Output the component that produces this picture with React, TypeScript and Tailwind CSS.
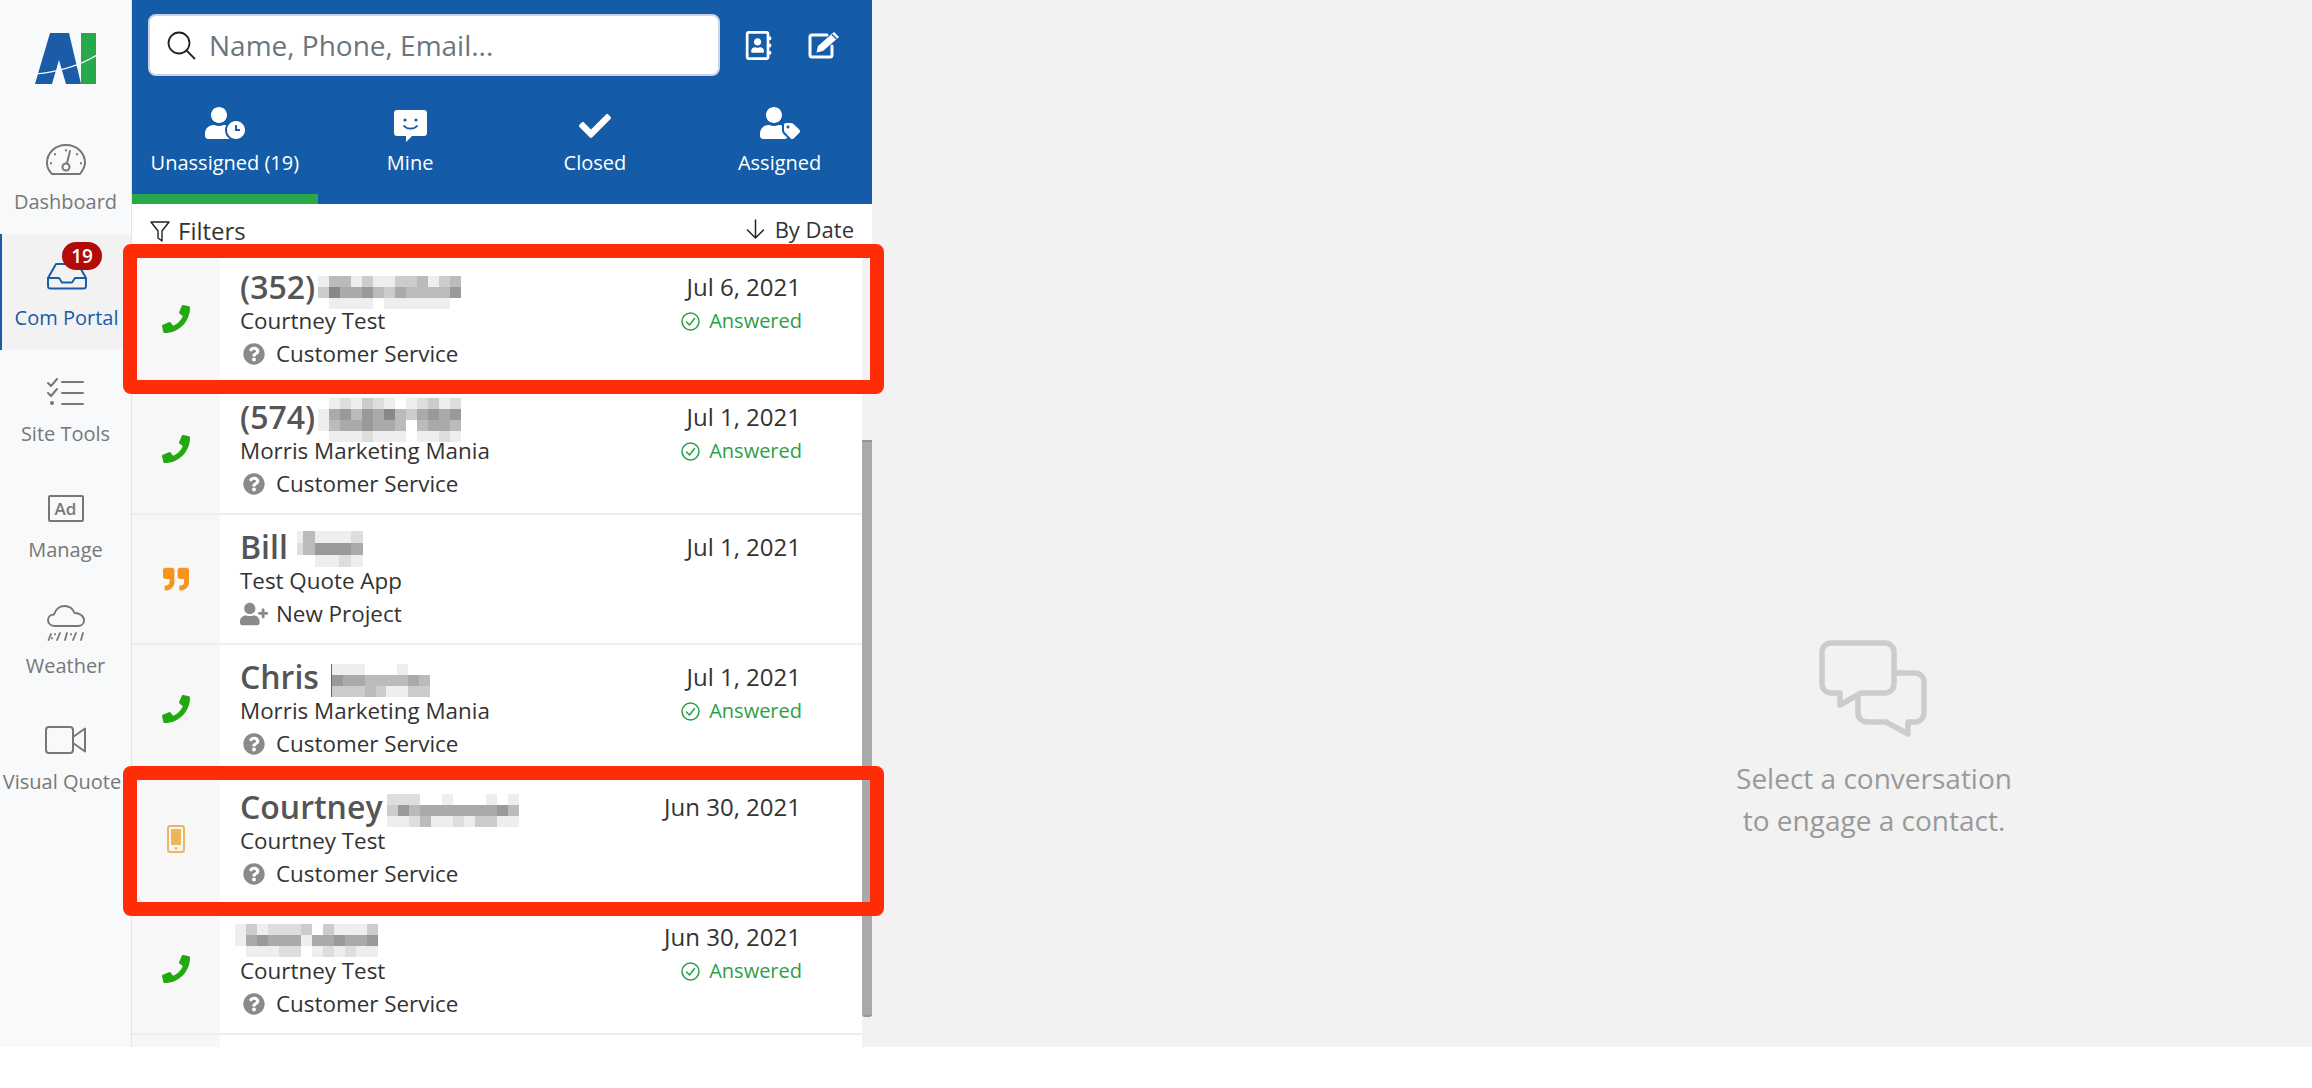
import type { ReactNode } from "react";
import {
  FaCheck,
  FaPhone,
  FaQuestionCircle,
  FaQuoteRight,
  FaRegAddressBook,
  FaUserClock,
  FaUserPlus,
  FaUserTag,
} from "react-icons/fa";

// rows of grey levels, one hex digit a cell
function Mosaic({ rows, cell = 11, inset = 0, className = "" }: { rows: string[]; cell?: number; inset?: number; className?: string }) {
  const w = Math.max(...rows.map((r) => r.length)) * cell;
  const h = rows.length * cell;
  return (
    <svg width={w - inset} height={h} viewBox={`${inset} 0 ${w - inset} ${h}`} shapeRendering="crispEdges" className={`blur-[0.6px] ${className}`}>
      {rows.map((row, y) =>
        row.split("").map((c, x) => {
          const v = parseInt(c, 16) * 17;
          return <rect key={`${x}-${y}`} x={x * cell} y={y * cell} width={cell} height={cell} fill={`rgb(${v},${v},${v})`} />;
        })
      )}
    </svg>
  );
}

function Logo() {
  return (
    <svg width="62" height="52" viewBox="0 0 62 52">
      <path d="M15 0H34L46 51H31L24 27L17 51H0Z" fill="#1a5ca8" />
      <rect x="46" y="0" width="15" height="51" fill="#27a84a" />
      <path d="M0 41C22 39 44 33 62 22" fill="none" stroke="#f8f9fb" strokeWidth="1.2" />
    </svg>
  );
}

const stroke = { fill: "none", stroke: "#777", strokeWidth: 2, strokeLinecap: "round", strokeLinejoin: "round" } as const;

function GaugeIcon() {
  return (
    <svg width="42" height="33" viewBox="0 0 42 33" className="-mb-[2px]" {...stroke}>
      <path d="M7 31H35C38 27 40 24 40 20C40 10 32 2 21 2C10 2 2 10 2 20C2 24 4 28 7 31Z" />
      <circle cx="21" cy="24" r="3.5" />
      <path d="M22 20L25 8M21 7V7.5M10 11V11.5M32 11V11.5M6 20V20.5M36 20V20.5" />
    </svg>
  );
}

function InboxIcon() {
  return (
    <svg width="42" height="28" viewBox="0 0 42 28" fill="none" stroke="#1a5ca8" strokeWidth="2" strokeLinejoin="round">
      <path d="M2 16L10 2H32L40 16V24C40 25.5 39 26.5 37.5 26.5H4.5C3 26.5 2 25.5 2 24Z" />
      <path d="M2 16H13L16 20.5H26L29 16H40" />
    </svg>
  );
}

function ChecklistIcon() {
  return (
    <svg width="38" height="28" viewBox="0 0 38 28" {...stroke}>
      <path d="M1 5L4 8L10 1M1 15L4 18L10 11M15 4H36M15 15H36M15 26H36" />
      <circle cx="5" cy="25" r="1" />
    </svg>
  );
}

function CloudRainIcon() {
  return (
    <svg width="38" height="37" viewBox="0 0 38 37" className="-mb-[4px]" {...stroke}>
      <path d="M8 21C4 21 1 18.5 1 15C1 11.5 4 9.5 7 9.5C8.5 4 13 1 17.5 1C22.5 1 26 4 27.5 8C32.5 8 37 11 37 15.5C37 19 34 21 31 21Z" />
      <path d="M4 29L1.5 35M13 28L10 35M20 28L18 35M29 28L26 35M36 28L34 35M8 29V29.5M24 29V29.5M5 33V33.5" strokeWidth="1.8" />
    </svg>
  );
}

function VideoIcon() {
  return (
    <svg width="42" height="28" viewBox="0 0 42 28" {...stroke}>
      <rect x="1" y="1" width="27" height="26" rx="3" />
      <path d="M28 11L40 2.5V25.5L28 17" />
    </svg>
  );
}

function AdIcon() {
  return (
    <div className="flex h-[27px] w-[36px] items-center justify-center rounded-[2px] border-2 border-[#777] text-[17px] leading-none font-semibold text-[#777]">
      Ad
    </div>
  );
}

function SearchIcon() {
  return (
    <svg width="29" height="29" viewBox="0 0 29 29" fill="none" stroke="#222" strokeWidth="1.8" strokeLinecap="round">
      <circle cx="12" cy="12" r="10.5" />
      <path d="M19.5 19.5L27.5 27.5" />
    </svg>
  );
}

function EditIcon() {
  return (
    <svg width="33" height="29" viewBox="0 0 33 29" className="mt-[16px] ml-[35px]">
      <path d="M19 5H4C2.8 5 2 5.8 2 7V25C2 26.2 2.8 27 4 27H22C23.2 27 24 26.2 24 25V16" fill="none" stroke="#fff" strokeWidth="3" strokeLinecap="round" />
      <path d="M26 2L31 7L15 21L8.5 22.5L10 16Z" fill="#fff" />
      <path d="M24 4.5L28.5 9" stroke="#145ca8" strokeWidth="1.4" />
    </svg>
  );
}

function MineIcon() {
  return (
    <svg width="33" height="32" viewBox="0 0 33 32">
      <path d="M3 0H30C31.7 0 33 1.3 33 3V23C33 24.7 31.7 26 30 26H18L12 32V26H3C1.3 26 0 24.7 0 23V3C0 1.3 1.3 0 3 0Z" fill="#fff" />
      <circle cx="11" cy="10" r="1.6" fill="#145ca8" />
      <circle cx="22" cy="10" r="1.6" fill="#145ca8" />
      <path d="M10 16C13 19.5 20 19.5 23 16" fill="none" stroke="#145ca8" strokeWidth="1.8" strokeLinecap="round" />
    </svg>
  );
}

function FilterIcon() {
  return (
    <svg width="20" height="21" viewBox="0 0 20 21" fill="none" stroke="#222" strokeWidth="1.4" strokeLinejoin="round">
      <path d="M1 1H19L12 10V20L8 17V10Z" />
    </svg>
  );
}

function ArrowIcon() {
  return (
    <svg width="19" height="20" viewBox="0 0 19 20" fill="none" stroke="#222" strokeWidth="1.5" strokeLinecap="round" strokeLinejoin="round">
      <path d="M9.5 1V19M1.5 11L9.5 19L17.5 11" />
    </svg>
  );
}

function DeviceIcon() {
  return (
    <svg width="18" height="28" viewBox="0 0 18 28">
      <rect x="1" y="1" width="16" height="26" rx="2.5" fill="none" stroke="#edb55c" strokeWidth="2" />
      <rect x="4" y="4" width="10" height="16" fill="#edb55c" />
      <circle cx="9" cy="23.5" r="1.4" fill="#edb55c" />
    </svg>
  );
}

function AnsweredIcon() {
  return (
    <svg width="19" height="19" viewBox="0 0 19 19" fill="none" stroke="#2a9f49" strokeWidth="1.5" strokeLinecap="round" strokeLinejoin="round">
      <circle cx="9.5" cy="9.5" r="8.5" />
      <path d="M5.5 10L8.5 13L13.5 6.5" />
    </svg>
  );
}

function ChatsIcon() {
  return (
    <svg width="110" height="97" viewBox="0 0 110 97" fill="none" stroke="#ccc" strokeWidth="5.5" strokeLinejoin="round">
      <path d="M12 3H66C71 3 75 7 75 12V44C75 49 71 53 66 53H42L21 65V53H12C7 53 3 49 3 44V12C3 7 7 3 12 3Z" />
      <path d="M75 33H96C101 33 105 37 105 42V73C105 78 101 82 96 82H89V94L67 82H48C43 82 39 78 39 73V53" />
    </svg>
  );
}

const phone = <FaPhone className="text-[28px] text-[#22a90f]" />;

const rows = [
  {
    name: "(352)",
    blur: <Mosaic rows={["ebbeceeccbecb", "c8aa9bcabbbb9", "feeeefeeeeeef"]} className="mt-[10px] ml-[3px]" />,
    sub: "Courtney Test",
    date: "Jul 6, 2021",
    answered: true,
    icon: phone,
  },
  {
    name: "(574)",
    blur: <Mosaic rows={["fedecdefedced", "ea9b9a8bca9a9", "ebaa9aabfbaab", "feeedeeefeede"]} className="mt-[6px] ml-[3px]" />,
    sub: "Morris Marketing Mania",
    date: "Jul 1, 2021",
    answered: true,
    icon: phone,
  },
  {
    name: "Bill",
    blur: (
      <div className="mt-[-1px] ml-[9px] h-[41px] self-start overflow-hidden pt-[5px]">
        <Mosaic rows={["ebeeedf", "db999af", "ffeedef", "efdefcee"]} cell={12} inset={6} />
      </div>
    ),
    sub: "Test Quote App",
    date: "Jul 1, 2021",
    answered: false,
    icon: <FaQuoteRight className="text-[26px] text-[#f7941d]" />,
    tag: "New Project",
  },
  {
    name: "Chris",
    blur: <Mosaic rows={["eeefffeff", "9aabbbbab", "cccbceecc"]} className="mt-[6px] ml-[12px] border-l border-[#666]" />,
    sub: "Morris Marketing Mania",
    date: "Jul 1, 2021",
    answered: true,
    icon: phone,
  },
  {
    name: "Courtney",
    blur: <Mosaic rows={["dddffefffefe", "c9baaaaaaa9b", "eedbeedeccee"]} className="mt-[6px] ml-[4px]" />,
    sub: "Courtney Test",
    date: "Jun 30, 2021",
    answered: false,
    icon: <DeviceIcon />,
  },
  {
    name: "",
    blur: <Mosaic rows={["ecedddcfceeec", "ea9aaaeaa9aa9", "feeeddfededee"]} className="mt-[6px] -ml-[5px]" />,
    sub: "Courtney Test",
    date: "Jun 30, 2021",
    answered: true,
    icon: phone,
  },
];

function Row({ row }: { row: (typeof rows)[number] }) {
  return (
    <div className="flex h-[130px] shrink-0 border-b-2 border-[#eeeeee] bg-white">
      <div className="flex w-[88px] shrink-0 items-center justify-center bg-[#f7f7f7]">{row.icon}</div>
      <div className="flex min-w-0 flex-1 flex-col pl-[20px] pt-[12px]">
        <div className="flex h-[40px] items-center text-[32px] leading-none font-semibold text-[#555]">
          {row.name}
          {row.blur}
        </div>
        <div className="mt-[-1px] text-[22.4px] leading-[30px] text-[#333]">{row.sub}</div>
        <div className="mt-[2px] flex items-center text-[22.4px] leading-[32px] text-[#333]">
          {row.tag ? (
            <FaUserPlus className="mr-[8px] text-[28px] text-[#8a8a8a]" />
          ) : (
            <FaQuestionCircle className="mr-[11px] ml-[3px] text-[22px] text-[#8a8a8a]" />
          )}
          {row.tag ?? "Customer Service"}
        </div>
      </div>
      <div className="flex flex-col items-end pt-[15px] pr-[60px]">
        <div className="pr-[1px] text-[24px] leading-[34px] text-[#333]">{row.date}</div>
        {row.answered ? (
          <div className="mt-[1px] flex items-center gap-[9px] text-[20px] leading-[32px] text-[#2a9f49]">
            <AnsweredIcon />
            Answered
          </div>
        ) : null}
      </div>
    </div>
  );
}

function NavItem({ icon, label, active, labelClass = "" }: { icon: ReactNode; label: string; active?: boolean; labelClass?: string }) {
  return (
    <div
      className={
        active
          ? "relative flex h-[116px] flex-col items-center border-l-2 border-[#145ca8] bg-[#f2f2f2] text-[#145ca8]"
          : "flex h-[116px] flex-col items-center text-[#777]"
      }
    >
      <div className="flex h-[62px] items-end pb-[6px]">{icon}</div>
      <div className={`mt-[8px] text-[20px] leading-[28px] whitespace-nowrap ${labelClass}`}>{label}</div>
      {active ? (
        <span className="absolute top-[8px] left-[60px] flex h-[28px] w-[40px] items-center justify-center rounded-full bg-[#b30a0a] text-[19px] leading-none font-semibold text-white">
          19
        </span>
      ) : null}
    </div>
  );
}

function Sidebar() {
  return (
    <aside className="flex w-[132px] shrink-0 flex-col border-r border-[#e4e5e7] bg-[#f8f9fb]">
      <div className="flex h-[118px] items-start justify-center pt-[33px]">
        <Logo />
      </div>
      <NavItem icon={<GaugeIcon />} label="Dashboard" />
      <NavItem active icon={<InboxIcon />} label="Com Portal" />
      <NavItem icon={<ChecklistIcon />} label="Site Tools" />
      <NavItem icon={<AdIcon />} label="Manage" />
      <NavItem icon={<CloudRainIcon />} label="Weather" />
      <NavItem icon={<VideoIcon />} label="Visual Quote" labelClass="pr-[7px]" />
    </aside>
  );
}

function Tab({ icon, label, active }: { icon: ReactNode; label: string; active?: boolean }) {
  return (
    <div className={active ? "flex w-[186px] flex-col items-center border-b-[10px] border-[#28a84a]" : "flex w-[185px] flex-col items-center border-b-[10px] border-transparent"}>
      <div className="flex h-[40px] items-end">{icon}</div>
      <div className="mt-[6px] text-[20px] leading-[30px] text-white">{label}</div>
    </div>
  );
}

function ListPanel() {
  return (
    <section className="flex w-[740px] shrink-0 flex-col">
      <div className="flex h-[204px] flex-col bg-[#145ca8]">
        <div className="flex h-[102px] items-start pt-[14px] pl-[16px]">
          <div className="flex h-[62px] w-[572px] items-center rounded-[8px] border-2 border-[#c9d5e6] bg-white pl-[17px]">
            <SearchIcon />
            <span className="ml-[13px] text-[28px] text-[#6c757d]">Name, Phone, Email...</span>
          </div>
          <FaRegAddressBook className="mt-[17px] ml-[24px] text-[29px] text-white" />
          <EditIcon />
        </div>
        <div className="flex flex-1">
          <Tab active icon={<FaUserClock className="-mb-[1px] text-[40px] text-white" />} label="Unassigned (19)" />
          <Tab icon={<MineIcon />} label="Mine" />
          <Tab icon={<FaCheck className="text-[32px] text-white" />} label="Closed" />
          <Tab icon={<FaUserTag className="-mb-[1px] text-[40px] text-white" />} label="Assigned" />
        </div>
      </div>
      <div className="flex h-[51px] shrink-0 items-start justify-between bg-white pt-[12px] pr-[18px] pl-[18px] text-[24px] leading-[30px] text-[#333]">
        <div className="flex items-center gap-[8px]">
          <FilterIcon />
          Filters
        </div>
        <div className="-mt-[2px] flex items-center gap-[10px] text-[22px]">
          <ArrowIcon />
          By Date
        </div>
      </div>
      <div className="flex min-h-0 flex-1">
        <div className="flex w-[730px] flex-col overflow-hidden">
          {rows.map((r, i) => (
            <Row key={i} row={r} />
          ))}
          <div className="flex h-[130px] shrink-0 bg-white">
            <div className="w-[88px] bg-[#f7f7f7]" />
          </div>
        </div>
        <div className="w-[10px] bg-[#f2f2f2]">
          <div className="mt-[185px] h-[577px] rounded-b-[3px] border-y-2 border-[#8b97a8] bg-[#a9a9a9]" />
        </div>
      </div>
    </section>
  );
}

function EmptyPane() {
  return (
    <section className="flex flex-1 flex-col items-center bg-[#f2f2f2] pt-[640px] pl-[564px]">
      <ChatsIcon />
      <div className="mt-[20px] text-center text-[28px] leading-[42px] text-[#999]">
        Select a conversation
        <br />
        to engage a contact.
      </div>
    </section>
  );
}

export default function App() {
  return (
    <div className="relative h-[1088px] bg-white font-['Open_Sans',sans-serif]">
      <div className="flex h-[1047px] overflow-hidden">
        <Sidebar />
        <ListPanel />
        <EmptyPane />
      </div>
      {/* red annotation frames over the list */}
      <div className="absolute top-[244px] left-[123px] h-[150px] w-[761px] rounded-[8px] border-[14px] border-[#fe2d07]" />
      <div className="absolute top-[766px] left-[123px] h-[150px] w-[761px] rounded-[8px] border-[14px] border-[#fe2d07]" />
    </div>
  );
}
